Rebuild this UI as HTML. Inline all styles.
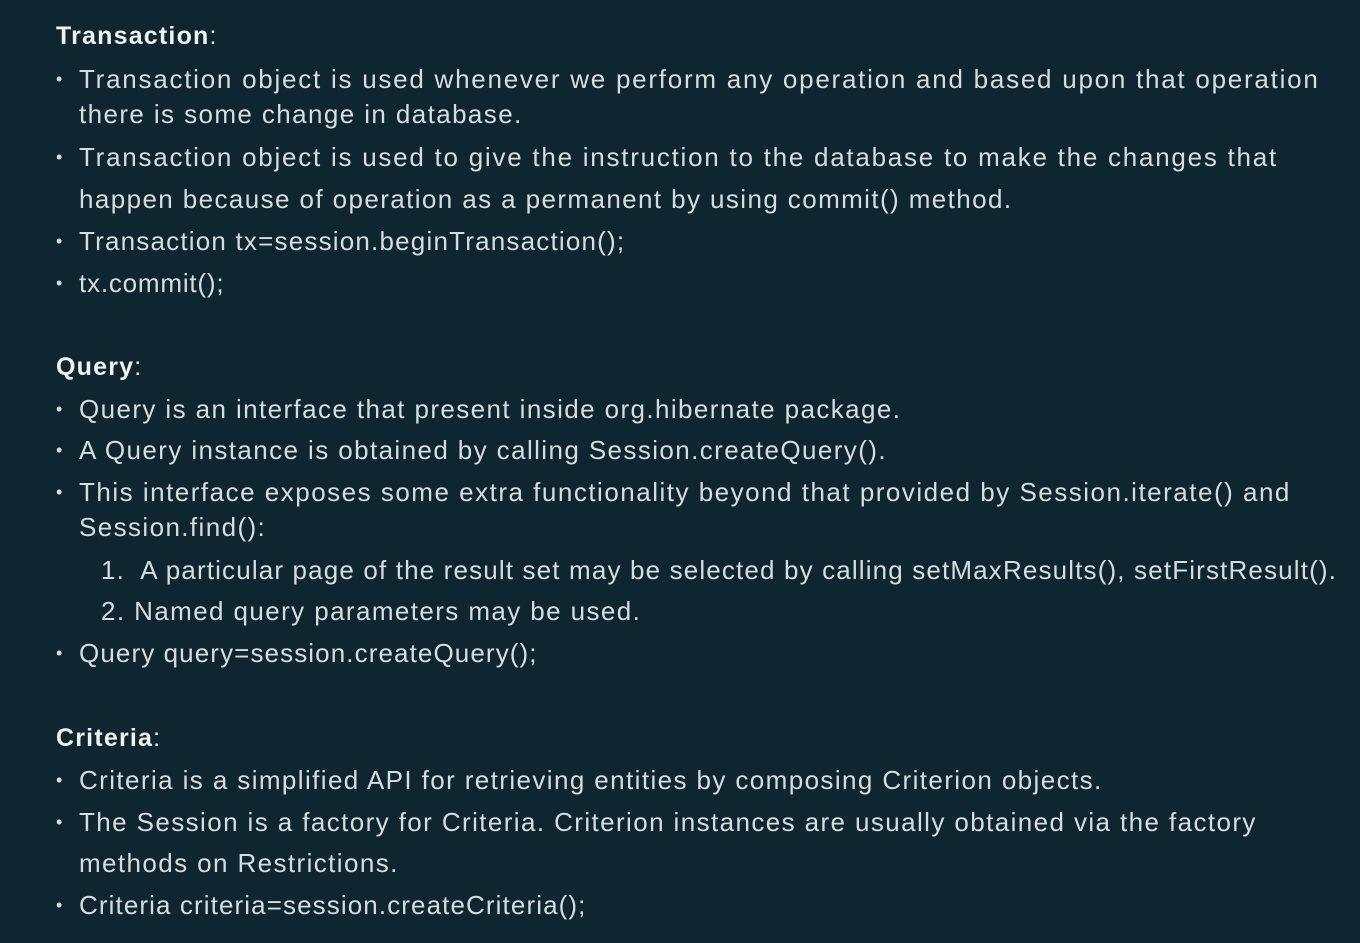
<!DOCTYPE html>
<html><head><meta charset="utf-8"><style>
html,body{margin:0;padding:0}
body{width:1360px;height:943px;background:#0f2630;position:relative;overflow:hidden;font-family:"Liberation Sans",sans-serif;color:#d6dde0;font-size:26px;letter-spacing:1.4px}
.l{position:absolute;left:79px;height:30px;line-height:30px;white-space:nowrap}
.b{position:absolute;left:56px;height:30px;line-height:30px;font-size:18px}
.h{position:absolute;left:56px;height:30px;line-height:30px;font-weight:bold;font-size:25px;letter-spacing:1.2px;color:#eef2f3}
</style></head><body>
<div class="h" style="top:21px">Transaction<span style="font-weight:normal">:</span></div>
<div class="b" style="top:64px">•</div><div class="l" style="top:64px;letter-spacing:1.75px">Transaction object is used whenever we perform any operation and based upon that operation</div>
<div class="l" style="top:99px">there is some change in database.</div>
<div class="b" style="top:142px">•</div><div class="l" style="top:142px;letter-spacing:1.75px">Transaction object is used to give the instruction to the database to make the changes that</div>
<div class="l" style="top:184px">happen because of operation as a permanent by using commit() method.</div>
<div class="b" style="top:226px">•</div><div class="l" style="top:226px;letter-spacing:1.2px">Transaction tx=session.beginTransaction();</div>
<div class="b" style="top:268px">•</div><div class="l" style="top:268px;letter-spacing:0.8px">tx.commit();</div>
<div class="h" style="top:352px">Query<span style="font-weight:normal">:</span></div>
<div class="b" style="top:394px">•</div><div class="l" style="top:394px">Query is an interface that present inside org.hibernate package.</div>
<div class="b" style="top:435px">•</div><div class="l" style="top:435px">A Query instance is obtained by calling Session.createQuery().</div>
<div class="b" style="top:477px">•</div><div class="l" style="top:477px;letter-spacing:1.5px">This interface exposes some extra functionality beyond that provided by Session.iterate() and</div>
<div class="l" style="top:512px">Session.find():</div>
<div class="l" style="top:555px;left:101px;letter-spacing:1.15px">1.&nbsp; A particular page of the result set may be selected by calling setMaxResults(), setFirstResult().</div>
<div class="l" style="top:596px;left:101px">2. Named query parameters may be used.</div>
<div class="b" style="top:638px">•</div><div class="l" style="top:638px;letter-spacing:1.1px">Query query=session.createQuery();</div>
<div class="h" style="top:723px">Criteria<span style="font-weight:normal">:</span></div>
<div class="b" style="top:765px">•</div><div class="l" style="top:765px">Criteria is a simplified API for retrieving entities by composing Criterion objects.</div>
<div class="b" style="top:807px">•</div><div class="l" style="top:807px">The Session is a factory for Criteria. Criterion instances are usually obtained via the factory</div>
<div class="l" style="top:848px">methods on Restrictions.</div>
<div class="b" style="top:890px">•</div><div class="l" style="top:890px;letter-spacing:1.1px">Criteria criteria=session.createCriteria();</div>
</body></html>
